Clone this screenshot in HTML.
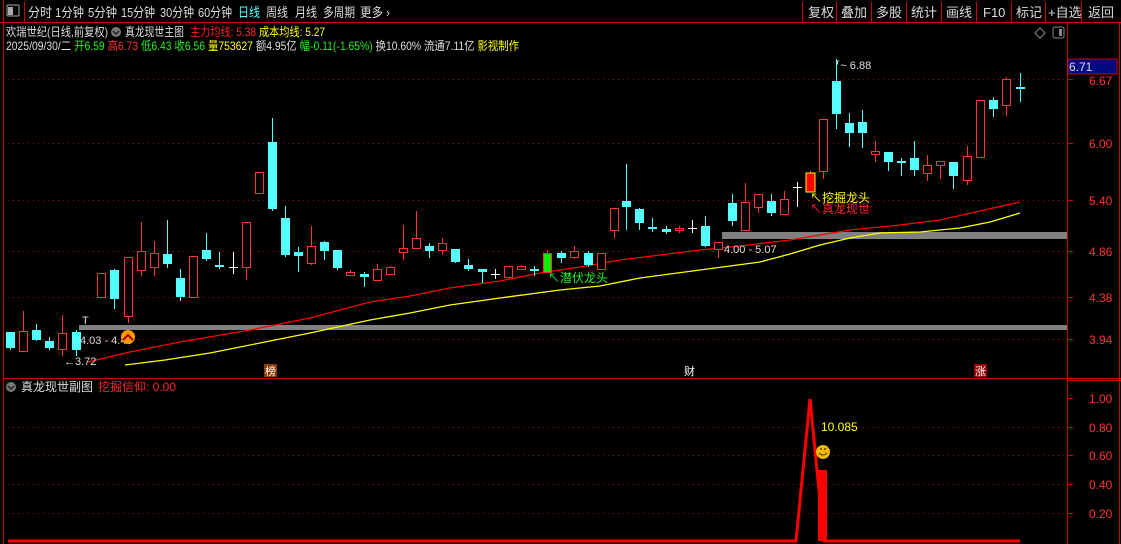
<!DOCTYPE html>
<html><head><meta charset="utf-8"><style>
body{margin:0;background:#000;width:1121px;height:544px;overflow:hidden;font-family:"Liberation Sans","Noto Sans CJK SC",sans-serif;}
svg{display:block}
text{font-family:"Liberation Sans","Noto Sans CJK SC",sans-serif;}
</style></head><body>
<svg id="s" width="1121" height="544" xmlns="http://www.w3.org/2000/svg">
<rect width="1121" height="544" fill="#000"/>
<line x1="0" y1="22.5" x2="1121" y2="22.5" stroke="#c00" />
<line x1="3.5" y1="0" x2="3.5" y2="544" stroke="#c00"/>
<rect x="7" y="5" width="12" height="11" fill="none" stroke="#aaa" rx="1"/><rect x="8" y="7" width="5" height="8" fill="#aaa"/>
<line x1="24.5" y1="2" x2="24.5" y2="22" stroke="#c00"/>
<g font-size="13" fill="#ddd">
<text x="28" y="17" textLength="24" lengthAdjust="spacingAndGlyphs">分时</text>
<text x="55" y="17" textLength="29" lengthAdjust="spacingAndGlyphs">1分钟</text>
<text x="88" y="17" textLength="29" lengthAdjust="spacingAndGlyphs">5分钟</text>
<text x="121" y="17" textLength="34" lengthAdjust="spacingAndGlyphs">15分钟</text>
<text x="160" y="17" textLength="34" lengthAdjust="spacingAndGlyphs">30分钟</text>
<text x="198" y="17" textLength="34" lengthAdjust="spacingAndGlyphs">60分钟</text>
<text x="238" y="17" fill="#5ff" textLength="22" lengthAdjust="spacingAndGlyphs">日线</text>
<text x="266" y="17" textLength="22" lengthAdjust="spacingAndGlyphs">周线</text>
<text x="295" y="17" textLength="22" lengthAdjust="spacingAndGlyphs">月线</text>
<text x="323" y="17" textLength="32" lengthAdjust="spacingAndGlyphs">多周期</text>
<text x="360" y="17" textLength="30" lengthAdjust="spacingAndGlyphs">更多 ›</text>
</g>
<g stroke="#c00"><line x1="802.5" y1="2" x2="802.5" y2="22"/><line x1="836.5" y1="2" x2="836.5" y2="22"/><line x1="871.5" y1="2" x2="871.5" y2="22"/><line x1="906.5" y1="2" x2="906.5" y2="22"/><line x1="941.5" y1="2" x2="941.5" y2="22"/><line x1="976.5" y1="2" x2="976.5" y2="22"/><line x1="1011.5" y1="2" x2="1011.5" y2="22"/><line x1="1045.5" y1="2" x2="1045.5" y2="22"/><line x1="1081.5" y1="2" x2="1081.5" y2="22"/></g>
<g font-size="13" fill="#ddd">
<text x="808" y="17">复权</text><text x="841" y="17">叠加</text><text x="876" y="17">多股</text><text x="911" y="17">统计</text><text x="946" y="17">画线</text><text x="983" y="17">F10</text><text x="1016" y="17">标记</text><text x="1048" y="17">+自选</text><text x="1088" y="17">返回</text>
</g>
<g font-size="12">
<text x="6" y="36" fill="#ddd" textLength="102" lengthAdjust="spacingAndGlyphs">欢瑞世纪(日线,前复权)</text>
<circle cx="116" cy="32" r="5" fill="#777"/><path d="M113 31l3 3 3-3" stroke="#222" fill="none" stroke-width="1.5"/>
<text x="125" y="36" fill="#ddd" textLength="59" lengthAdjust="spacingAndGlyphs">真龙现世主图</text>
<text x="190" y="36" fill="#f22" textLength="66" lengthAdjust="spacingAndGlyphs">主力均线: 5.38</text>
<text x="259" y="36" fill="#ff0" textLength="66" lengthAdjust="spacingAndGlyphs">成本均线: 5.27</text>
<text x="6" y="50" fill="#ddd" textLength="513" lengthAdjust="spacingAndGlyphs">2025/09/30/二 <tspan fill="#2e2">开6.59</tspan> <tspan fill="#f33">高6.73</tspan> <tspan fill="#2e2">低6.43</tspan> <tspan fill="#2e2">收6.56</tspan> <tspan fill="#ff0">量753627</tspan> 额4.95亿 <tspan fill="#2e2">幅-0.11(-1.65%)</tspan> 换10.60% 流通7.11亿 <tspan fill="#ff0">影视制作</tspan></text>
</g>
<path d="M1040 28l5 5-5 5-5-5z" fill="none" stroke="#888"/>
<rect x="1053" y="27" width="11" height="11" fill="none" stroke="#888" rx="2"/><rect x="1059" y="29" width="3" height="7" fill="#888"/>
<line x1="1067.5" y1="22" x2="1067.5" y2="544" stroke="#c00"/>
<line x1="1119.5" y1="22" x2="1119.5" y2="544" stroke="#c00"/>
<line x1="3" y1="378.5" x2="1121" y2="378.5" stroke="#c00"/>
<line x1="1067" y1="380.5" x2="1121" y2="380.5" stroke="#c00"/>
<g stroke="#a00" stroke-dasharray="1,4">
<line x1="8" y1="79.5" x2="1067" y2="79.5"/><line x1="8" y1="143.5" x2="1067" y2="143.5"/><line x1="8" y1="200.5" x2="1067" y2="200.5"/><line x1="8" y1="251.5" x2="1067" y2="251.5"/><line x1="8" y1="297.5" x2="1067" y2="297.5"/><line x1="8" y1="339.5" x2="1067" y2="339.5"/>
<line x1="8" y1="427.5" x2="1067" y2="427.5"/><line x1="8" y1="455.5" x2="1067" y2="455.5"/><line x1="8" y1="484.5" x2="1067" y2="484.5"/><line x1="8" y1="513.5" x2="1067" y2="513.5"/>
</g>
<g stroke="#c00"><line x1="1067" y1="79.5" x2="1073" y2="79.5"/><line x1="1067" y1="143.5" x2="1073" y2="143.5"/><line x1="1067" y1="200.5" x2="1073" y2="200.5"/><line x1="1067" y1="251.5" x2="1073" y2="251.5"/><line x1="1067" y1="297.5" x2="1073" y2="297.5"/><line x1="1067" y1="339.5" x2="1073" y2="339.5"/>
<line x1="1067" y1="398.5" x2="1073" y2="398.5"/><line x1="1067" y1="427.5" x2="1073" y2="427.5"/><line x1="1067" y1="455.5" x2="1073" y2="455.5"/><line x1="1067" y1="484.5" x2="1073" y2="484.5"/><line x1="1067" y1="513.5" x2="1073" y2="513.5"/></g>
<g font-size="12" fill="#f33">
<text x="1089" y="85">6.67</text><text x="1089" y="148">6.00</text><text x="1089" y="205">5.40</text><text x="1089" y="256">4.86</text><text x="1089" y="302">4.38</text><text x="1089" y="344">3.94</text>
<text x="1089" y="403">1.00</text><text x="1089" y="432">0.80</text><text x="1089" y="460">0.60</text><text x="1089" y="489">0.40</text><text x="1089" y="518">0.20</text>
</g>
<rect x="1068" y="59" width="49" height="15" fill="#000a80" stroke="#c00"/>
<text x="1069" y="71" font-size="12" fill="#ddd">6.71</text>
<rect x="79" y="325" width="988" height="5" fill="#808080"/>
<rect x="722" y="232" width="345" height="7" fill="#808080"/>
<polyline fill="none" stroke="#f00" stroke-width="1.3" points="88,362 130,352 180,342 250,330 310,318 370,302 410,296 450,288 500,281 540,273 580,267 620,260 660,255 700,250 740,246 790,240 820,235 850,230 900,225 940,220 980,211 1020,202"/>
<polyline fill="none" stroke="#ff0" stroke-width="1.3" points="125,365 165,360 210,353 260,343 310,333 370,320 410,313 450,305 500,298 560,290 600,286 640,278 700,270 760,262 790,254 820,245 850,238 880,233 920,232 960,228 990,222 1020,213"/>
<g id="c"></g>
<g font-size="11" fill="#ddd">
<text x="82" y="324">T</text>
<text x="80" y="344">4.03 - 4.40</text>
<text x="64" y="365">←3.72</text>
<text x="724" y="253">4.00 - 5.07</text>
<text x="836" y="69">⸢~ 6.88</text>
</g>
<circle cx="128" cy="337" r="7" fill="#f90"/><path d="M123 340l5-5 5 5" stroke="#a00" stroke-width="2" fill="none"/>
<text x="548" y="282" font-size="12" fill="#2e2">↖潜伏龙头</text>
<text x="810" y="202" font-size="12" fill="#ff0">↖挖掘龙头</text>
<text x="810" y="213" font-size="12" fill="#f22">↖真龙现世</text>
<g font-size="11" fill="#fff">
<rect x="264" y="364" width="13" height="13" fill="#8a3a00"/><text x="265" y="375">榜</text>
<rect x="683" y="364" width="13" height="13" fill="#000"/><text x="684" y="375">财</text>
<rect x="974" y="364" width="13" height="13" fill="#900"/><text x="975" y="375">涨</text>
</g>
<circle cx="11" cy="387" r="5" fill="#777"/><path d="M8 386l3 3 3-3" stroke="#222" fill="none" stroke-width="1.5"/>
<text x="21" y="391" font-size="12" fill="#ddd">真龙现世副图</text>
<text x="98" y="391" font-size="12" fill="#f22">挖掘信仰: 0.00</text>
<polyline fill="none" stroke="#f00" stroke-width="3" points="8,541 796,541 810,399 824,541 1020,541"/>
<rect x="818" y="470" width="9" height="71" fill="#f00"/>
<text x="821" y="431" font-size="12" fill="#ff0">10.085</text>
<circle cx="823" cy="452" r="7" fill="#eb0"/><path d="M819 453q4 4 8 0" stroke="#630" fill="none"/><circle cx="821" cy="449" r="1" fill="#630"/><circle cx="825" cy="449" r="1" fill="#630"/>
</svg>
<script>
var d=[[9.5,332,348,332,350,'c'],[23,331,351,311,351,'r'],[36,330,340,324,341,'c'],[49,341,348,337,350,'c'],[62,333,349,315,356,'r'],[76,332,350,330,356,'c'],
[101,273,297,273,297,'r'],[114,270,299,269,309,'c'],[128,257,316,257,323,'r'],[141,251,270,222,276,'r'],[154,253,267,241,276,'r'],[167,254,264,220,268,'c'],[180,278,297,269,301,'c'],[193,256,297,256,297,'r'],[206,250,259,233,261,'c'],[219,265,267,252,269,'c'],[233,266,268,252,274,'w'],[246,222,267,222,280,'r'],[259,172,193,172,194,'r'],[272,142,209,118,211,'c'],[285,218,255,206,257,'c'],[298,252,256,247,272,'c'],[311,246,263,226,265,'r'],[324,242,251,241,260,'c'],[337,250,268,250,270,'c'],[350,272,275,270,275,'r'],[364,274,277,272,287,'c'],
[377,269,280,264,280,'r'],[390,267,274,266,275,'r'],[403,248,252,225,260,'r'],[416,238,248,211,248,'r'],[429,246,251,243,258,'c'],[442,243,250,238,255,'r'],[455,249,262,249,263,'c'],[468,265,269,259,271,'c'],[482,269,272,269,283,'c'],[495,273,275,269,279,'w'],[508,266,277,266,277,'r'],[521,266,269,265,269,'r'],[534,269,271,266,276,'c'],[547,253,272,250,272,'g'],[561,253,258,251,263,'c'],[574,251,257,246,259,'r'],[588,253,265,251,267,'c'],[601,253,269,253,269,'r'],[614,208,230,208,238,'r'],[626,201,207,164,230,'c'],[639,209,223,208,230,'c'],[652,227,229,218,232,'c'],[666,229,232,226,234,'c'],[679,228,230,226,233,'r'],[692,227,229,220,233,'w'],[705,226,246,216,247,'c'],
[718,242,249,242,258,'r'],[732,203,221,194,226,'c'],[745,202,230,183,230,'r'],[758,194,207,194,213,'r'],[771,201,213,194,216,'c'],[784,199,214,191,214,'r'],[797,186,188,182,207,'w'],[810,173,192,171,192,'R'],[823,119,171,119,179,'r'],[836,81,114,59,129,'c'],[849,123,133,113,147,'c'],[862,122,133,110,148,'c'],[875,151,154,141,162,'r'],[888,152,162,152,171,'c'],[901,161,163,158,176,'c'],[914,158,170,141,176,'c'],[927,165,173,155,181,'r'],[940,161,165,161,179,'r'],[953,162,176,162,189,'c'],[967,156,180,146,185,'r'],[980,100,157,100,157,'r'],[993,100,109,97,117,'c'],[1006,79,105,77,116,'r'],[1020,87,89,73,102,'c']];
var g=document.getElementById('c'),h='';
d.forEach(function(a){var x=Math.round(a[0]),t=a[1],b=a[2],wt=a[3],wb=a[4],k=a[5];
var col=k=='c'?'#5ff':k=='w'?'#fff':'#f33';
h+='<line x1="'+(x+.5)+'" y1="'+wt+'" x2="'+(x+.5)+'" y2="'+wb+'" stroke="'+col+'"/>';
var bh=Math.max(b-t,1);
if(k=='c'){h+='<rect x="'+(x-4)+'" y="'+t+'" width="9" height="'+bh+'" fill="#5ff"/>';}
else if(k=='w'){h+='<line x1="'+(x-4)+'" y1="'+(t+1.5)+'" x2="'+(x+5)+'" y2="'+(t+1.5)+'" stroke="#fff"/>';}
else if(k=='R'){h+='<rect x="'+(x-4)+'" y="'+t+'" width="9" height="'+bh+'" fill="#f00" stroke="#ff0"/>';}
else if(k=='g'){h+='<rect x="'+(x-3.5)+'" y="'+(t+.5)+'" width="8" height="'+bh+'" fill="#0e0" stroke="#f33"/>';}
else{h+='<rect x="'+(x-3.5)+'" y="'+(t+.5)+'" width="8" height="'+bh+'" fill="#000" stroke="#f33"/>';}
});
g.innerHTML=h;
</script>
</body></html>
